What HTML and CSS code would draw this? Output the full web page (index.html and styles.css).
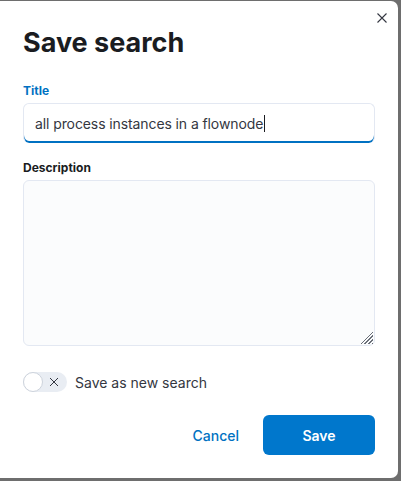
FILE: index.html
```html
<!DOCTYPE html>
<html>
<head>
<meta charset="utf-8">
<link rel="stylesheet" href="styles.css">
</head>
<body>
<div class="modal">
  <button class="close" aria-label="Close">
    <svg width="12" height="12" viewBox="0 0 12 12"><path d="M1.5 1.5L10.5 10.5M10.5 1.5L1.5 10.5" stroke="#343741" stroke-width="1.1" fill="none"/></svg>
  </button>
  <h1 class="title">Save search</h1>
  <div class="form">
    <div class="field">
      <label class="label label-active">Title</label>
      <div class="input">all process instances in a flownode<span class="caret"></span></div>
    </div>
    <div class="field field-desc">
      <label class="label">Description</label>
      <div class="textarea-wrap">
        <textarea class="textarea"></textarea>
        <span class="grip"></span>
      </div>
    </div>
    <div class="switch-row">
      <span class="switch">
        <span class="thumb"></span>
        <svg class="switch-x" width="10" height="10" viewBox="0 0 10 10"><path d="M1 1L9 9M9 1L1 9" stroke="#343741" stroke-width="1" fill="none"/></svg>
      </span>
      <span class="switch-label">Save as new search</span>
    </div>
  </div>
  <div class="footer">
    <button class="btn-empty">Cancel</button>
    <button class="btn-primary">Save</button>
  </div>
</div>
</body>
</html>
```

FILE: styles.css
```css
* { box-sizing: border-box; }
html, body { margin: 0; padding: 0; }
body {
  background: #6e6e6e;
  font-family: Inter, "Noto Sans", sans-serif;
  width: 401px;
  height: 481px;
  overflow: hidden;
}
.modal {
  position: relative;
  margin-top: 1px;
  width: 398px;
  height: 477px;
  background: #fff;
  border-radius: 0 7px 7px 0;
  padding: 26px 23px 23px 23px;
  display: flex;
  flex-direction: column;
}
.close {
  position: absolute;
  top: 11px;
  right: 10px;
  width: 12px;
  height: 12px;
  padding: 0;
  border: 0;
  background: none;
  display: flex;
}
.title {
  margin: 0;
  font-size: 27px;
  line-height: 32px;
  font-weight: 700;
  color: #1a1c21;
}
.form {
  margin-top: 24px;
  display: flex;
  flex-direction: column;
}
.field { display: flex; flex-direction: column; }
.field-desc { margin-top: 17px; }
.label {
  font-size: 12px;
  line-height: 16px;
  font-weight: 700;
  color: #1a1c21;
  margin-bottom: 4px;
}
.label-active { color: #0071c2; }
.input {
  height: 40px;
  border: 1px solid #e3e8f2;
  border-bottom: 0;
  border-radius: 6px;
  box-shadow: inset 0 -2px 0 #0071c2;
  padding: 0 11px;
  display: flex;
  align-items: center;
  font-size: 14px;
  letter-spacing: -0.1px;
  color: #343741;
  background: #fff;
}
.caret {
  display: inline-block;
  width: 1px;
  height: 17px;
  background: #1a1c21;
  margin-left: 1px;
}
.textarea-wrap {
  position: relative;
  height: 166px;
}
.textarea {
  display: block;
  width: 100%;
  height: 100%;
  resize: none;
  background: #fbfcfd;
  border: 1px solid #e3e8f2;
  border-radius: 6px;
  outline: none;
  font-family: inherit;
}
.grip {
  position: absolute;
  right: 2px;
  bottom: 2px;
  width: 13px;
  height: 13px;
  background: repeating-linear-gradient(135deg, transparent 0 1.4px, #6a6f78 1.4px 2.6px);
  clip-path: polygon(100% 0, 100% 100%, 0 100%);
}
.switch-row {
  margin-top: 26px;
  display: flex;
  align-items: center;
  height: 20px;
}
.switch {
  position: relative;
  width: 44px;
  height: 20px;
  border-radius: 10px;
  background: #e9edf3;
  display: flex;
  align-items: center;
}
.thumb {
  position: absolute;
  left: 0;
  top: 0;
  width: 20px;
  height: 20px;
  border-radius: 50%;
  background: #fff;
  border: 1px solid #cdd3dc;
}
.switch-x {
  position: absolute;
  left: 26px;
  top: 5px;
}
.switch-label {
  margin-left: 8px;
  font-size: 14px;
  color: #343741;
}
.footer {
  margin-top: auto;
  display: flex;
  justify-content: flex-end;
  align-items: center;
  gap: 12px;
}
.btn-empty {
  border: 0;
  background: none;
  font-family: inherit;
  font-size: 14px;
  font-weight: 500;
  color: #0071c2;
  padding: 0 12px;
  height: 40px;
}
.btn-primary {
  width: 112px;
  height: 40px;
  border: 0;
  border-radius: 6px;
  background: #0077cc;
  color: #fff;
  font-family: inherit;
  font-size: 14px;
  font-weight: 600;
}
```
